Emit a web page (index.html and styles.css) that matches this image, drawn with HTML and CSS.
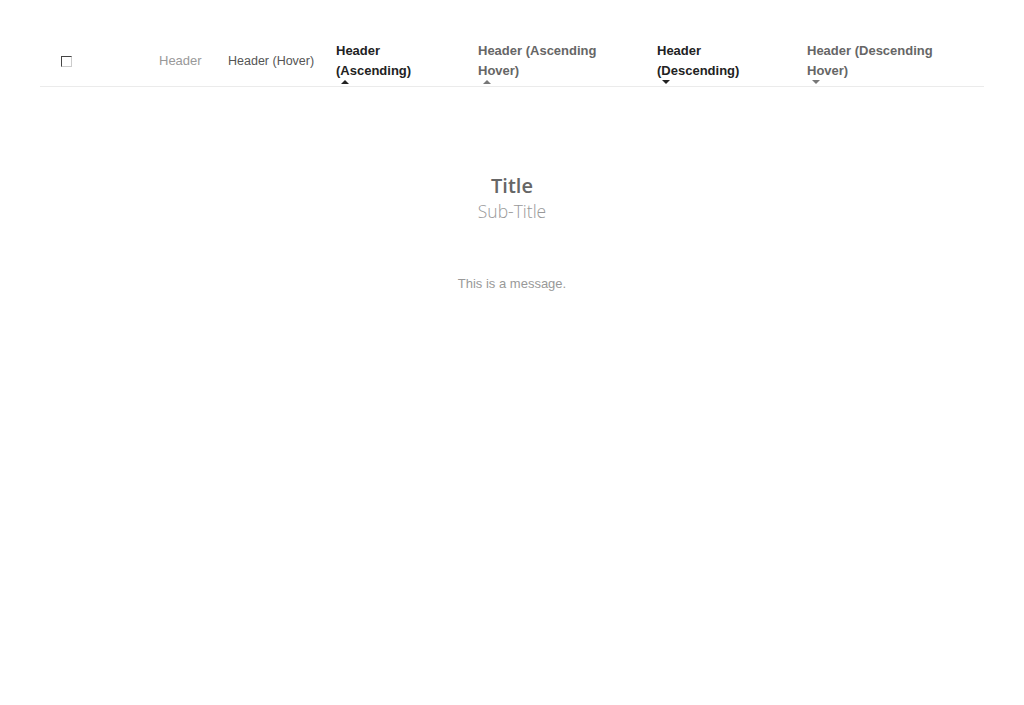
FILE: index.html
```html
<!DOCTYPE html>
<html>
<head>
<meta charset="utf-8">
<link rel="stylesheet" href="styles.css">
</head>
<body>
<div class="page">
  <div class="table-head">
    <div class="cell cell-check"><span class="checkbox"></span></div>
    <div class="cell c1"><span class="label plain">Header</span></div>
    <div class="cell c2"><span class="label hover">Header (Hover)</span></div>
    <div class="cell c3"><span class="label sorted">Header<br>(Ascending)</span><span class="arrow up dark"></span></div>
    <div class="cell c4"><span class="label sorted-hover">Header (Ascending<br>Hover)</span><span class="arrow up grey"></span></div>
    <div class="cell c5"><span class="label sorted">Header<br>(Descending)</span><span class="arrow down dark"></span></div>
    <div class="cell c6"><span class="label sorted-hover">Header (Descending<br>Hover)</span><span class="arrow down grey"></span></div>
  </div>
  <div class="empty">
    <div class="title">Title</div>
    <div class="subtitle">Sub-Title</div>
    <div class="message">This is a message.</div>
  </div>
</div>
</body>
</html>
```

FILE: styles.css
```css
html, body {
  margin: 0;
  padding: 0;
  background: #fff;
}
.page {
  padding: 40px 40px 0 40px;
  font-family: "Liberation Sans", Arial, sans-serif;
}
.table-head {
  display: grid;
  grid-template-columns: 119px 69px 108px 142px 179px 150px 1fr;
  height: 46px;
  border-bottom: 1px solid #ebebeb;
}
.cell {
  position: relative;
  display: flex;
  align-items: center;
  height: 40px;
  padding-top: 1px;
  box-sizing: border-box;
  font-size: 13px;
  line-height: 20px;
}
.cell-check {
  padding-left: 21px;
  padding-top: 2px;
}
.checkbox {
  display: block;
  width: 9px;
  height: 9px;
  border-top: 1px solid #444;
  border-left: 1px solid #444;
  border-right: 1px solid #ccc;
  border-bottom: 1px solid #ccc;
}
.label.plain { color: #999; }
.label.hover { color: #555; font-size: 12.5px; }
.label.sorted { color: #222; font-weight: bold; }
.label.sorted-hover { color: #666; font-weight: bold; }
.arrow {
  position: absolute;
  left: 5px;
  top: 40px;
  width: 0;
  height: 0;
  border-left: 4px solid transparent;
  border-right: 4px solid transparent;
}
.arrow.up.dark { border-bottom: 4px solid #222; }
.arrow.up.grey { border-bottom: 4px solid #777; }
.arrow.down.dark { border-top: 4px solid #222; }
.arrow.down.grey { border-top: 4px solid #777; }
.empty {
  display: flex;
  flex-direction: column;
  align-items: center;
  padding-top: 87px;
}
.title {
  font-family: "Open Sans", sans-serif;
  font-weight: 600;
  font-size: 20px;
  line-height: 24px;
  color: #666;
}
.subtitle {
  font-family: "Open Sans", sans-serif;
  font-weight: 300;
  font-size: 17.5px;
  line-height: 26px;
  color: #999;
}
.message {
  margin-top: 52px;
  font-size: 13px;
  line-height: 16px;
  color: #999;
}
```
